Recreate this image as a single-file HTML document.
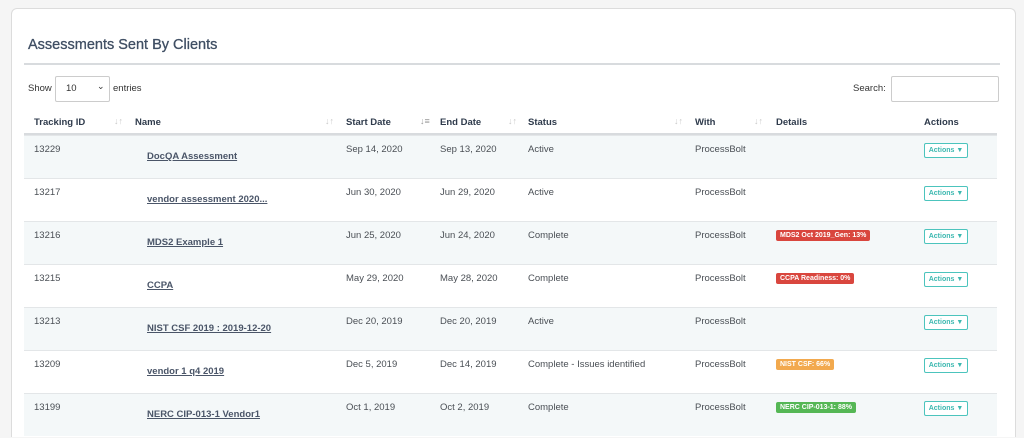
<!DOCTYPE html>
<html style="overflow:hidden;height:438px"><head><meta charset="utf-8"><style>
body{margin:0;background:#f5f5f5;font-family:"Liberation Sans",Arial,sans-serif;width:1024px;height:438px;overflow:hidden;position:relative}
.card{position:absolute;left:11px;top:8px;width:1003px;height:428px;background:#fff;border:1px solid #dcdcdc;border-bottom:none;border-radius:6px 6px 0 0}
.t{position:absolute;white-space:nowrap}
.title{left:28px;top:37px;font-size:14.5px;color:#3f4e63;-webkit-text-stroke:0.3px #3f4e63}
.hr{position:absolute;left:24px;top:63px;width:976px;height:2px;background:#d8dbde}
.s{font-size:9.5px;color:#333}
.sel{position:absolute;left:55px;top:76px;width:53px;height:24px;border:1px solid #ccc;border-radius:2px;background:#fff}
.srch{position:absolute;left:891px;top:76px;width:106px;height:24px;border:1px solid #ccc;border-radius:2px}
.th{font-size:9.5px;font-weight:bold;color:#2f3b4c;top:117px}
.ic{font-size:9px;color:#c8c8c8;top:116px}
.row{position:absolute;left:24px;width:973px;height:42px;border-top:1px solid #e3e6e8}
.odd{background:#f4f8f9}
.c{font-size:9.5px;color:#4a4f55}
.lk{font-size:9.5px;font-weight:bold;color:#4a5568;text-decoration:underline}
.btn{position:absolute;left:924px;width:42px;height:13px;border:1px solid #4cc4bd;border-radius:2px;font-size:7px;font-weight:bold;color:#3cb8b0;text-align:center;line-height:13px;background:#fff}
.bd{position:absolute;left:776px;height:11px;font-size:7px;font-weight:bold;color:#fff;line-height:11px;padding:0 4px;border-radius:2px}
</style></head><body>
<div class="card"></div>
<div class="t title">Assessments Sent By Clients</div>
<div class="hr"></div>
<div class="t s" style="left:28px;top:83px">Show</div>
<div class="sel"><span class="t s" style="left:10px;top:6px">10</span><span class="t" style="left:41px;top:4px;font-size:9px;color:#333">&#8964;</span></div>
<div class="t s" style="left:113px;top:83px">entries</div>
<div class="t s" style="left:853px;top:83px">Search:</div>
<div class="srch"></div>
<div class="t th" style="left:34px">Tracking ID</div><div class="t ic" style="left:114px">↓↑</div>
<div class="t th" style="left:135px">Name</div><div class="t ic" style="left:325px">↓↑</div>
<div class="t th" style="left:346px">Start Date</div><div class="t ic" style="left:420px;color:#999">↓≡</div>
<div class="t th" style="left:440px">End Date</div><div class="t ic" style="left:508px">↓↑</div>
<div class="t th" style="left:528px">Status</div><div class="t ic" style="left:674px">↓↑</div>
<div class="t th" style="left:695px">With</div><div class="t ic" style="left:754px">↓↑</div>
<div class="t th" style="left:776px">Details</div>
<div class="t th" style="left:924px">Actions</div>
<div style="position:absolute;left:24px;top:133px;width:973px;height:2px;background:#d8dbde"></div>

<div class="row odd" style="top:135px"></div>
<div class="row" style="top:178px"></div>
<div class="row odd" style="top:221px"></div>
<div class="row" style="top:264px"></div>
<div class="row odd" style="top:307px"></div>
<div class="row" style="top:350px"></div>
<div class="row odd" style="top:393px"></div>

<div class="t c" style="left:34px;top:144px">13229</div><div class="t lk" style="left:147px;top:151px">DocQA Assessment</div><div class="t c" style="left:346px;top:144px">Sep 14, 2020</div><div class="t c" style="left:440px;top:144px">Sep 13, 2020</div><div class="t c" style="left:528px;top:144px">Active</div><div class="t c" style="left:695px;top:144px">ProcessBolt</div><div class="btn" style="top:143px">Actions ▼</div>

<div class="t c" style="left:34px;top:187px">13217</div><div class="t lk" style="left:147px;top:194px">vendor assessment 2020...</div><div class="t c" style="left:346px;top:187px">Jun 30, 2020</div><div class="t c" style="left:440px;top:187px">Jun 29, 2020</div><div class="t c" style="left:528px;top:187px">Active</div><div class="t c" style="left:695px;top:187px">ProcessBolt</div><div class="btn" style="top:186px">Actions ▼</div>

<div class="t c" style="left:34px;top:230px">13216</div><div class="t lk" style="left:147px;top:237px">MDS2 Example 1</div><div class="t c" style="left:346px;top:230px">Jun 25, 2020</div><div class="t c" style="left:440px;top:230px">Jun 24, 2020</div><div class="t c" style="left:528px;top:230px">Complete</div><div class="t c" style="left:695px;top:230px">ProcessBolt</div><div class="bd" style="top:230px;background:#d9463e">MDS2 Oct 2019_Gen: 13%</div><div class="btn" style="top:229px">Actions ▼</div>

<div class="t c" style="left:34px;top:273px">13215</div><div class="t lk" style="left:147px;top:280px">CCPA</div><div class="t c" style="left:346px;top:273px">May 29, 2020</div><div class="t c" style="left:440px;top:273px">May 28, 2020</div><div class="t c" style="left:528px;top:273px">Complete</div><div class="t c" style="left:695px;top:273px">ProcessBolt</div><div class="bd" style="top:273px;background:#d9463e">CCPA Readiness: 0%</div><div class="btn" style="top:272px">Actions ▼</div>

<div class="t c" style="left:34px;top:316px">13213</div><div class="t lk" style="left:147px;top:323px">NIST CSF 2019 : 2019-12-20</div><div class="t c" style="left:346px;top:316px">Dec 20, 2019</div><div class="t c" style="left:440px;top:316px">Dec 20, 2019</div><div class="t c" style="left:528px;top:316px">Active</div><div class="t c" style="left:695px;top:316px">ProcessBolt</div><div class="btn" style="top:315px">Actions ▼</div>

<div class="t c" style="left:34px;top:359px">13209</div><div class="t lk" style="left:147px;top:366px">vendor 1 q4 2019</div><div class="t c" style="left:346px;top:359px">Dec 5, 2019</div><div class="t c" style="left:440px;top:359px">Dec 14, 2019</div><div class="t c" style="left:528px;top:359px">Complete - Issues identified</div><div class="t c" style="left:695px;top:359px">ProcessBolt</div><div class="bd" style="top:359px;background:#f2a94e">NIST CSF: 66%</div><div class="btn" style="top:358px">Actions ▼</div>

<div class="t c" style="left:34px;top:402px">13199</div><div class="t lk" style="left:147px;top:409px">NERC CIP-013-1 Vendor1</div><div class="t c" style="left:346px;top:402px">Oct 1, 2019</div><div class="t c" style="left:440px;top:402px">Oct 2, 2019</div><div class="t c" style="left:528px;top:402px">Complete</div><div class="t c" style="left:695px;top:402px">ProcessBolt</div><div class="bd" style="top:402px;background:#55b755">NERC CIP-013-1: 88%</div><div class="btn" style="top:401px">Actions ▼</div>
</body></html>
